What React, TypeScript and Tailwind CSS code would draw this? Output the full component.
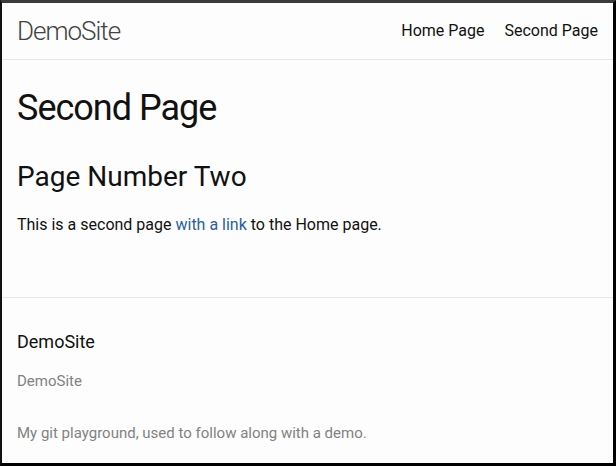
import React from "react";

const Header = () => (
  <header className="min-h-[57px] border-b border-[#e8e8e8]">
    <div className="flex items-center justify-between px-[15px] pt-px">
      <a className="text-[26px] font-light leading-[54px] tracking-[-1px] text-[#424242]">
        DemoSite
      </a>
      <nav className="flex gap-5 leading-[54px] text-[16px] text-[#111]">
        <a>Home Page</a>
        <a>Second Page</a>
      </nav>
    </div>
  </header>
);

const Main = () => (
  <main className="px-[15px] py-[30px]">
    <article className="mb-[30px]">
      <h1 className="mb-[30px] text-[36px] leading-none tracking-[-1px] text-[#111]">
        Second Page
      </h1>
      <div>
        <h2 className="mb-[15px] text-[28px] leading-[42px]">Page Number Two</h2>
        <p className="text-[16px] leading-6">
          This is a second page <a className="text-[#2a5f9e]">with a link</a> to the Home page.
        </p>
      </div>
    </article>
  </main>
);

const Footer = () => (
  <footer className="border-t border-[#e8e8e8] px-[15px] py-[30px]">
    <h2 className="mb-[15px] text-[18px] leading-[27px] text-[#111]">DemoSite</h2>
    <div className="text-[15px] leading-[22.5px] text-[#828282]">
      <ul>
        <li>DemoSite</li>
      </ul>
      <p className="mt-[29px]">My git playground, used to follow along with a demo.</p>
    </div>
  </footer>
);

export default function App() {
  return (
    <div
      className="h-[466px] w-[616px] overflow-hidden border-t-[3px] border-l-2 border-r-[3px] border-b-[3px] border-t-[#3b3b3b] border-l-[#111] border-r-black border-b-black bg-[#fdfdfd] text-[#111]"
      style={{ fontFamily: "Roboto, 'Liberation Sans', sans-serif" }}
    >
      <Header />
      <Main />
      <Footer />
    </div>
  );
}
